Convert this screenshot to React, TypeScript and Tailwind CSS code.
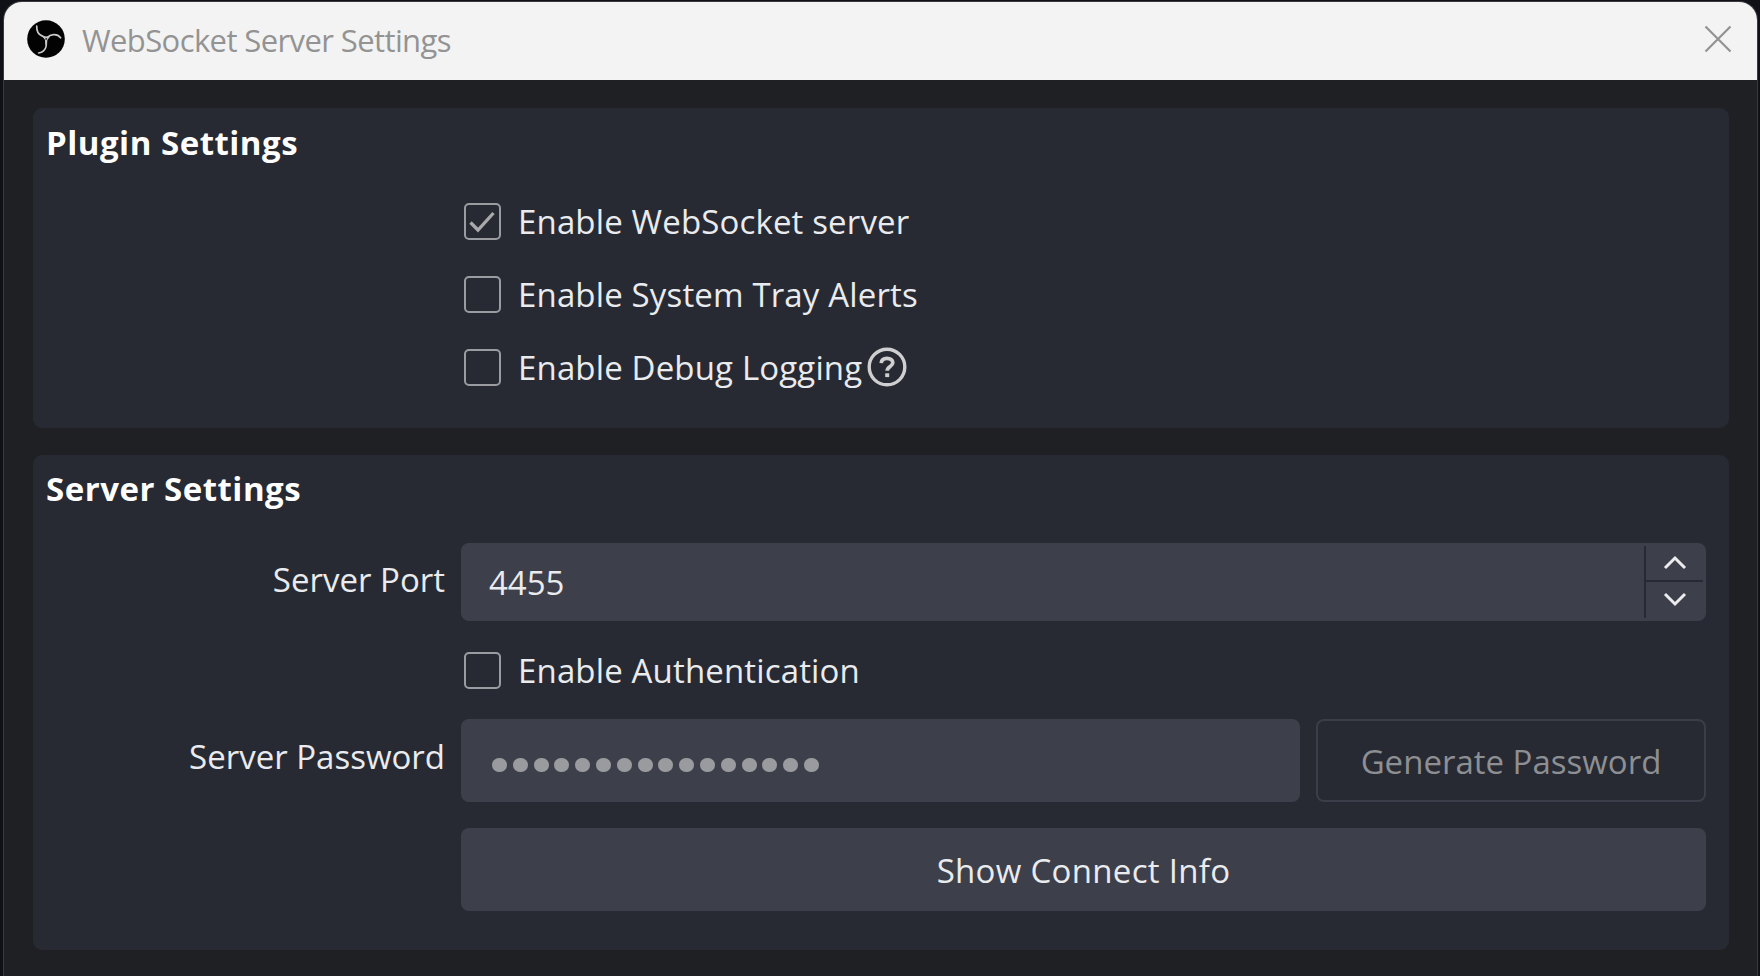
import React from "react";

const label = "whitespace-nowrap text-[33px] leading-[44px] text-[#eaebee]";
const heading = "text-[33px] leading-[44px] font-bold tracking-[0.5px] text-[#fefefe]";

function ObsLogo() {
  return (
    <svg viewBox="0 0 38 38" className="size-[38px] shrink-0">
      <circle cx="19" cy="19" r="18.8" fill="#020202" />
      <g fill="none" stroke="#c9c9c9" strokeWidth="1.7" strokeLinecap="round">
        <path d="M9.7 6C9.6 10.6 11 14.4 15 15.9L18.2 17.4" />
        <path d="M20.4 17.4C23 14.6 29.8 12.8 33.6 17.8" />
        <path d="M19.2 20.4C19.4 23.4 20.2 27.6 16.8 30.6C15.2 32.2 13.4 32.8 11.6 33" />
      </g>
      <path d="M15.4 16.2L23.2 16.4L20.4 20L19.8 24.5H18.2L18 20Z" fill="#c4c4c4" />
      <circle cx="19.2" cy="18.9" r="0.9" fill="#222" />
    </svg>
  );
}

function CheckBox({ text, checked = false, children }: { text: string; checked?: boolean; children?: React.ReactNode }) {
  return (
    <div className="flex h-[73px] items-center">
      <span className="flex size-[37px] shrink-0 items-center justify-center rounded-[5px] border-2 border-[#9b9ca2]">
        {checked && (
          <svg viewBox="0 0 33 33" className="size-[33px]">
            <path d="M4.5 17.5L12 25L27.5 8" fill="none" stroke="#a9a9ab" strokeWidth="3.3" />
          </svg>
        )}
      </span>
      <span className={`ml-[17px] tracking-[0.15px] ${label}`}>{text}</span>
      {children}
    </div>
  );
}

function HelpIcon() {
  return (
    <svg viewBox="0 0 40 40" className="mb-[2px] ml-[5px] size-10 shrink-0" fill="none" stroke="#cfcfd1">
      <circle cx="20" cy="20" r="17.8" strokeWidth="3.4" />
      <path d="M14.2 16.2C14.4 12.8 16.8 11.4 20 11.4C23.4 11.4 25.8 13 25.8 15.8C25.8 19.6 20.2 19.4 20.2 23.8" strokeWidth="3.7" />
      <path d="M18.2 28.2H22.2" strokeWidth="3.8" />
    </svg>
  );
}

export default function App() {
  return (
    <div className="flex h-[976px] w-[1760px] flex-col overflow-hidden bg-[#101116] pt-px pr-[2px] pl-[3px] font-['Open_Sans',sans-serif]">
      <div className="flex min-h-0 flex-1 flex-col overflow-hidden rounded-t-[19px] border-x border-t border-[#3a3a3e] bg-[#1f2024]">
        <header className="flex h-[78px] shrink-0 items-center bg-[#f3f3f3] pr-[25px] pb-[4px] pl-[23px]">
          <ObsLogo />
          <h1 className="ml-[17px] pt-[2px] text-[31px] leading-[44px] tracking-[-0.6px] text-[#939393]">WebSocket Server Settings</h1>
          <svg viewBox="0 0 28 28" className="ml-auto size-7">
            <path d="M1.5 1.5L26.5 26.5M26.5 1.5L1.5 26.5" stroke="#929292" strokeWidth="2.2" />
          </svg>
        </header>
        <main className="flex flex-col gap-[27px] pt-7 pr-7 pl-[29px]">
          <section className="h-[320px] rounded-[9px] bg-[#272a32] pt-[13px] pl-[13px]">
            <h2 className={heading}>Plugin Settings</h2>
            <div className="mt-[20px] ml-[418px]">
              <CheckBox text="Enable WebSocket server" checked />
              <CheckBox text="Enable System Tray Alerts" />
              <CheckBox text="Enable Debug Logging"><HelpIcon /></CheckBox>
            </div>
          </section>
          <section className="h-[495px] rounded-[9px] bg-[#272a32] pt-[12px] pr-[23px] pl-[13px]">
            <h2 className={heading}>Server Settings</h2>
            <div className="mt-8 grid grid-cols-[399px_1fr] gap-x-4">
              <span className={`mt-[15px] text-right ${label}`}>Server Port</span>
              <div className="flex h-[78px] rounded-lg bg-[#3d404b]">
                <span className={`flex-1 pt-[18px] pl-7 ${label}`}>4455</span>
                <div className="my-[3px] mr-[3px] flex w-[59px] flex-col border-l-2 border-[#272a32]">
                  <div className="flex flex-1 items-center justify-center border-b-2 border-[#272a32]">
                    <svg viewBox="0 0 24 16" className="h-4 w-6"><path d="M2 13L12 3L22 13" fill="none" stroke="#ececef" strokeWidth="3" /></svg>
                  </div>
                  <div className="flex flex-1 items-center justify-center pb-[2px]">
                    <svg viewBox="0 0 24 16" className="h-4 w-6"><path d="M2 3L12 13L22 3" fill="none" stroke="#ececef" strokeWidth="3" /></svg>
                  </div>
                </div>
              </div>
              <div className="col-start-2 h-[98px] pt-[13px] pl-[3px]">
                <CheckBox text="Enable Authentication" />
              </div>
              <span className={`mt-[16px] text-right ${label}`}>Server Password</span>
              <div className="flex gap-4">
                <div className="flex h-[83px] flex-1 items-center gap-[5.8px] rounded-lg bg-[#3d404b] pt-[8px] pl-[31px]">
                  {Array.from({ length: 16 }, (_, i) => (
                    <span key={i} className="h-[14px] w-[15px] shrink-0 rounded-full bg-[#9a9b9e]" />
                  ))}
                </div>
                <div className={`flex h-[83px] w-[390px] items-center justify-center rounded-lg border-2 border-[#3b3e48] pt-[2px] ${label}`}>
                  <span className="text-[#8e8f93]">Generate Password</span>
                </div>
              </div>
              <div className={`col-start-2 mt-[26px] flex h-[83px] items-center justify-center rounded-lg bg-[#3d404b] pt-[2px] tracking-[0.3px] ${label}`}>Show Connect Info</div>
            </div>
          </section>
        </main>
      </div>
    </div>
  );
}
